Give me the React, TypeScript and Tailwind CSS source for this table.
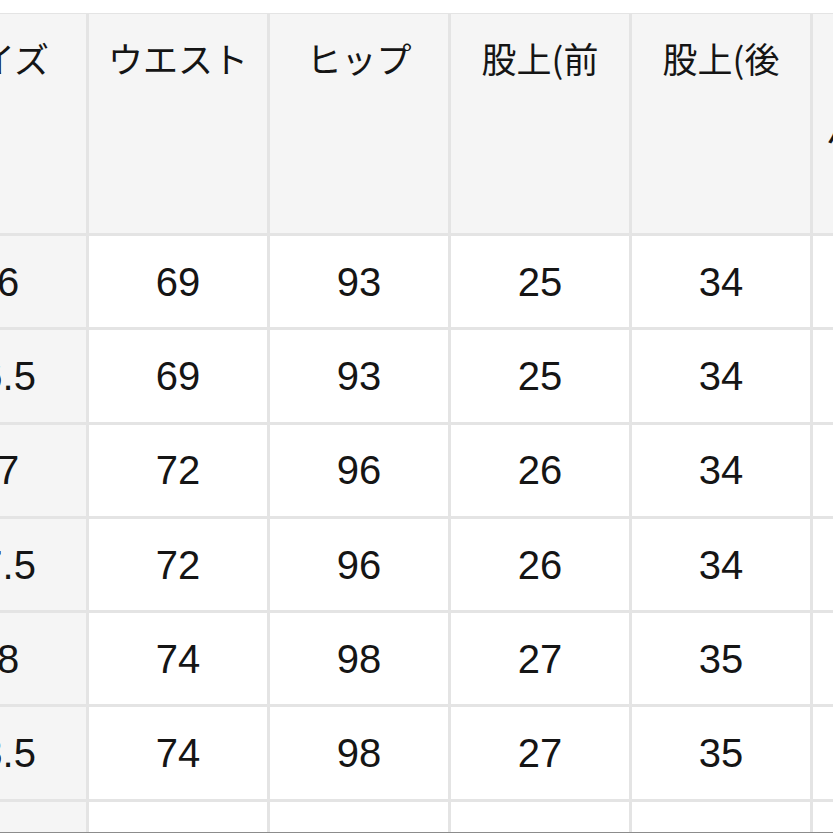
import React from 'react';

const headers: string[] = ['サイズ', 'ウエスト', 'ヒップ', '股上(前', '股上(後', 'ワタリ パンツ丈', '股下'];

const rows: string[][] = [
  ['26', '69', '93', '25', '34', '30', '72'],
  ['26.5', '69', '93', '25', '34', '30', '72'],
  ['27', '72', '96', '26', '34', '31', '73'],
  ['27.5', '72', '96', '26', '34', '31', '73'],
  ['28', '74', '98', '27', '35', '32', '74'],
  ['28.5', '74', '98', '27', '35', '32', '74'],
  ['29', '77', '101', '28', '35', '33', '75'],
];

const App: React.FC = () => {
  return (
    <div className="w-[833px] h-[833px] bg-white overflow-hidden flex flex-col">
      <div className="h-[13px] shrink-0 bg-white" />
      <div className="flex-1 overflow-hidden">
        <div className="ml-[-92px] w-max grid grid-cols-[repeat(7,178px)] gap-[3px] bg-[#e4e4e4] pt-[1px] text-[#151515]">
          {headers.map((h, i) => (
            <div
              key={h}
              className="h-[219px] bg-[#f5f5f5] pt-[9px] px-3 text-center text-[35px] leading-[70px] font-['Noto_Sans_CJK_JP',sans-serif]"
            >
              {i === 5 ? (
                <>
                  <div className="whitespace-nowrap">ワタリ</div>
                  <div className="text-left pl-[1px] whitespace-nowrap">パンツ丈</div>
                </>
              ) : (
                h
              )}
            </div>
          ))}
          {rows.map(row =>
            row.map((v, j) => (
              <div
                key={row[0] + '-' + j}
                className={`h-[91.3px] flex items-center justify-center text-[40px] font-['Liberation_Sans',Arial,sans-serif] ${j === 0 ? 'bg-[#f5f5f5]' : 'bg-white'}`}
              >
                {v}
              </div>
            ))
          )}
        </div>
      </div>
      <div className="h-[1px] shrink-0 bg-[#8c8c8c]" />
    </div>
  );
};

export default App;
